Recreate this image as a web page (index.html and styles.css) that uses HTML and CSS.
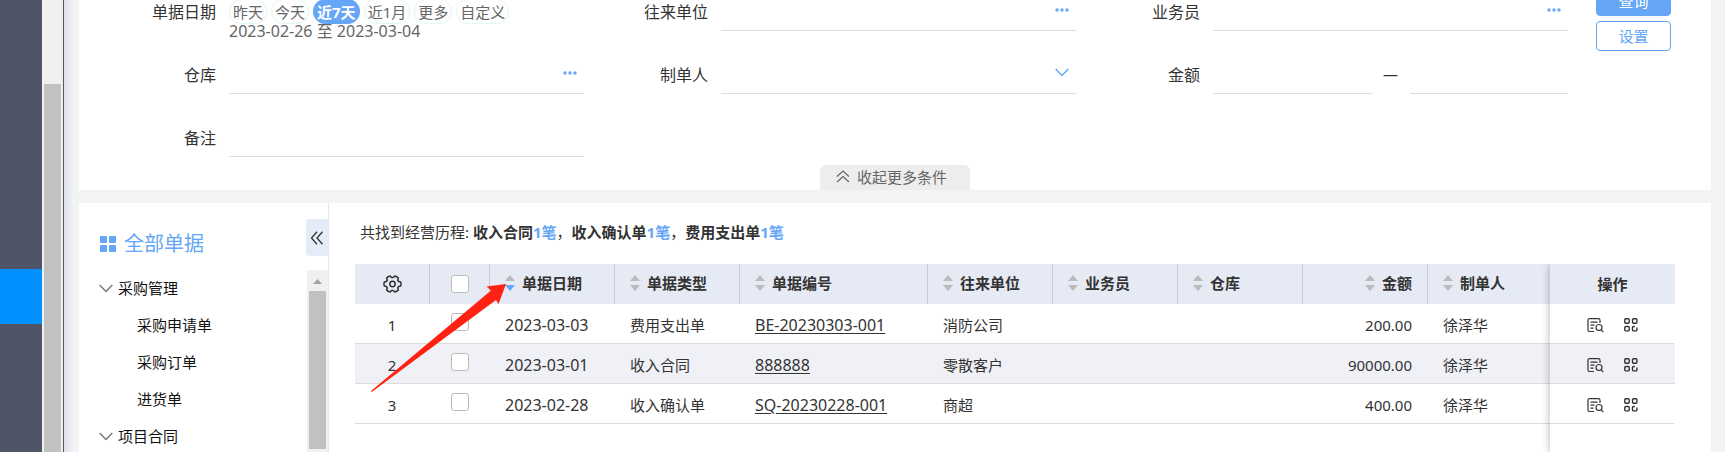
FILE: index.html
```html
<!DOCTYPE html>
<html lang="zh-CN">
<head>
    <meta charset="UTF-8">
    <meta name="viewport" content="width=device-width, initial-scale=1.0">
    <title>经营历程</title>
    <link rel="stylesheet" href="styles.css">
</head>
<body>
    <!-- shared icons -->
    <svg class="sprite" aria-hidden="true">
        <symbol id="icon-dots" viewBox="0 0 14 4">
            <circle cx="2" cy="2" r="1.7"/><circle cx="7" cy="2" r="1.7"/><circle cx="12" cy="2" r="1.7"/>
        </symbol>
        <symbol id="icon-down" viewBox="0 0 14 9">
            <path d="M.7 1 7 7.6 13.300 1" fill="none" stroke="currentColor" stroke-width="1.4"/>
        </symbol>
        <symbol id="icon-sort" viewBox="0 0 10 16">
            <path class="sort-up" d="M5 0l5 6H0z"/><path class="sort-down" d="M5 16l5-6H0z"/>
        </symbol>
        <symbol id="icon-view" viewBox="0 0 17 15">
            <g fill="none" stroke="currentColor" stroke-width="1.200">
                <path d="M7 13.500H2.600A1.500 1.500 0 0 1 1 12V2.200A1.500 1.500 0 0 1 2.600 .7H11.500A1.500 1.500 0 0 1 13 2.200V5"/>
                <path d="M3.500 4.200h7M3.500 7.200h4M3.500 10.200h3"/>
                <circle cx="12" cy="9.500" r="3"/>
                <path d="M14 11.800l2.400 2.400"/>
            </g>
        </symbol>
        <symbol id="icon-more" viewBox="0 0 14 14">
            <g fill="none" stroke="currentColor" stroke-width="1.400">
                <rect x=".8" y=".8" width="4.400" height="4.400" rx="1"/>
                <rect x="8.500" y=".8" width="4.400" height="4.400" rx="1"/>
                <rect x=".8" y="8.500" width="4.400" height="4.400" rx="1"/>
                <path d="M10.800 8.500H9.500a1 1 0 0 0-1 1v2.400a1 1 0 0 0 1 1h2.400a1 1 0 0 0 1-1V9.500"/>
            </g>
        </symbol>
    </svg>

    <nav class="side-nav">
        <a href="#" class="side-nav-active" aria-label="经营历程"></a>
    </nav>
    <div class="nav-scroll"><div class="nav-scroll-thumb"></div></div>

    <div class="page">
        <form class="search-panel">
            <div class="search-body">
                <div class="fields">
                    <div class="field">
                        <span class="field-label">单据日期</span>
                        <div class="date-box">
                            <div class="pills">
                                <button type="button" class="pill">昨天</button>
                                <button type="button" class="pill">今天</button>
                                <button type="button" class="pill active">近7天</button>
                                <button type="button" class="pill">近1月</button>
                                <button type="button" class="pill">更多</button>
                                <button type="button" class="pill">自定义</button>
                            </div>
                            <div class="date-range">2023-02-26 至 2023-03-04</div>
                        </div>
                    </div>
                    <div class="field">
                        <label class="field-label" for="unit">往来单位</label>
                        <div class="control">
                            <input type="text" id="unit">
                            <button type="button" class="pick" aria-label="选择往来单位"><svg class="dots"><use href="#icon-dots"/></svg></button>
                        </div>
                    </div>
                    <div class="field">
                        <label class="field-label" for="clerk">业务员</label>
                        <div class="control">
                            <input type="text" id="clerk">
                            <button type="button" class="pick" aria-label="选择业务员"><svg class="dots"><use href="#icon-dots"/></svg></button>
                        </div>
                    </div>
                    <div class="field">
                        <label class="field-label" for="store">仓库</label>
                        <div class="control">
                            <input type="text" id="store">
                            <button type="button" class="pick" aria-label="选择仓库"><svg class="dots"><use href="#icon-dots"/></svg></button>
                        </div>
                    </div>
                    <div class="field">
                        <label class="field-label" for="maker">制单人</label>
                        <div class="control">
                            <select id="maker"><option value=""></option></select>
                            <svg class="arrow-down"><use href="#icon-down"/></svg>
                        </div>
                    </div>
                    <div class="field">
                        <label class="field-label" for="amount-min">金额</label>
                        <div class="range">
                            <div class="control"><input type="text" id="amount-min"></div>
                            <span class="range-dash">—</span>
                            <div class="control"><input type="text" id="amount-max" aria-label="最大金额"></div>
                        </div>
                    </div>
                    <div class="field">
                        <label class="field-label" for="remark">备注</label>
                        <div class="control"><input type="text" id="remark"></div>
                    </div>
                </div>
                <div class="search-buttons">
                    <button type="submit" class="btn btn-primary">查询</button>
                    <button type="button" class="btn">设置</button>
                </div>
            </div>
            <button type="button" class="fold">
                <svg width="14" height="13" viewBox="0 0 14 13" fill="none" stroke="currentColor" stroke-width="1.200"><path d="M1 6.500 7 1l6 5.500M1 12l6-5.500 6 5.500"/></svg>
                收起更多条件
            </button>
        </form>

        <div class="result-panel">
            <aside class="tree-side">
                <div class="tree-top">
                    <h2 class="tree-title">
                        <svg width="16" height="16" viewBox="0 0 16 16" fill="currentColor"><rect width="7" height="7" rx="1"/><rect x="9" width="7" height="7" rx="1"/><rect y="9" width="7" height="7" rx="1"/><rect x="9" y="9" width="7" height="7" rx="1"/></svg>
                        全部单据
                    </h2>
                    <button type="button" class="tree-fold" aria-label="收起">
                        <svg width="14" height="14" viewBox="0 0 14 14" fill="none" stroke="currentColor" stroke-width="1.300"><path d="M7 .8 1.500 7 7 13.200M12.500 .8 7 7l5.500 6.200"/></svg>
                    </button>
                </div>
                <div class="tree-body">
                    <ul class="tree">
                        <li class="tree-parent"><svg class="arrow"><use href="#icon-down"/></svg>采购管理</li>
                        <li><a href="#">采购申请单</a></li>
                        <li><a href="#">采购订单</a></li>
                        <li><a href="#">进货单</a></li>
                        <li class="tree-parent"><svg class="arrow"><use href="#icon-down"/></svg>项目合同</li>
                    </ul>
                    <div class="tree-scroll">
                        <svg width="9" height="5" viewBox="0 0 9 5"><path d="M4.500 0 9 5H0z" fill="#a3a3a3"/></svg>
                        <div class="tree-scroll-thumb"></div>
                    </div>
                </div>
            </aside>

            <main class="result">
                <p class="summary">共找到经营历程: <b>收入合同<em>1笔</em></b>，<b>收入确认单<em>1笔</em></b>，<b>费用支出单<em>1笔</em></b></p>
                <div class="tables">
                    <table class="list">
                        <colgroup>
                            <col class="w-index"><col class="w-check"><col class="w-base"><col class="w-base"><col class="w-code">
                            <col class="w-base"><col class="w-base"><col class="w-base"><col class="w-base"><col class="w-last">
                        </colgroup>
                        <thead>
                            <tr>
                                <th class="center">
                                    <svg class="gear" width="19" height="18" viewBox="0 0 19 18" fill="none" stroke="currentColor" stroke-width="1.500" stroke-linejoin="round" aria-label="列设置"><path d="M17.700 7Q18.300 9 17.700 11L15.600 11.500 14.700 13 15.400 15.100Q14 16.600 11.800 17.100L10.400 15.500H8.600L7.200 17.100Q5 16.600 3.600 15.100L4.300 13 3.400 11.500 1.300 11Q.7 9 1.300 7L3.400 6.500 4.300 5 3.600 2.900Q5 1.400 7.200 .9L8.600 2.500h1.800L11.800 .9Q14 1.400 15.400 2.900L14.700 5 15.600 6.500z"/><circle cx="9.500" cy="9" r="2.700"/></svg>
                                </th>
                                <th class="center"><input type="checkbox" aria-label="全选"></th>
                                <th><span class="head desc"><svg class="sort"><use href="#icon-sort"/></svg>单据日期</span></th>
                                <th><span class="head"><svg class="sort"><use href="#icon-sort"/></svg>单据类型</span></th>
                                <th><span class="head"><svg class="sort"><use href="#icon-sort"/></svg>单据编号</span></th>
                                <th><span class="head"><svg class="sort"><use href="#icon-sort"/></svg>往来单位</span></th>
                                <th><span class="head"><svg class="sort"><use href="#icon-sort"/></svg>业务员</span></th>
                                <th><span class="head"><svg class="sort"><use href="#icon-sort"/></svg>仓库</span></th>
                                <th class="right"><span class="head"><svg class="sort"><use href="#icon-sort"/></svg>金额</span></th>
                                <th><span class="head"><svg class="sort"><use href="#icon-sort"/></svg>制单人</span></th>
                            </tr>
                        </thead>
                        <tbody>
                            <tr>
                                <td class="center">1</td>
                                <td class="center"><input type="checkbox" aria-label="选择第1行"></td>
                                <td class="num">2023-03-03</td>
                                <td>费用支出单</td>
                                <td class="num"><a href="#">BE-20230303-001</a></td>
                                <td>消防公司</td>
                                <td></td>
                                <td></td>
                                <td class="right">200.00</td>
                                <td>徐泽华</td>
                            </tr>
                            <tr>
                                <td class="center">2</td>
                                <td class="center"><input type="checkbox" aria-label="选择第2行"></td>
                                <td class="num">2023-03-01</td>
                                <td>收入合同</td>
                                <td class="num"><a href="#">888888</a></td>
                                <td>零散客户</td>
                                <td></td>
                                <td></td>
                                <td class="right">90000.00</td>
                                <td>徐泽华</td>
                            </tr>
                            <tr>
                                <td class="center">3</td>
                                <td class="center"><input type="checkbox" aria-label="选择第3行"></td>
                                <td class="num">2023-02-28</td>
                                <td>收入确认单</td>
                                <td class="num"><a href="#">SQ-20230228-001</a></td>
                                <td>商超</td>
                                <td></td>
                                <td></td>
                                <td class="right">400.00</td>
                                <td>徐泽华</td>
                            </tr>
                        </tbody>
                    </table>
                    <!-- fixed right column -->
                    <div class="fixed-col">
                        <table class="list">
                            <thead>
                                <tr><th class="center">操作</th></tr>
                            </thead>
                            <tbody>
                                <tr><td><div class="ops"><button type="button" aria-label="查看"><svg class="view"><use href="#icon-view"/></svg></button><button type="button" aria-label="更多操作"><svg class="more"><use href="#icon-more"/></svg></button></div></td></tr>
                                <tr><td><div class="ops"><button type="button" aria-label="查看"><svg class="view"><use href="#icon-view"/></svg></button><button type="button" aria-label="更多操作"><svg class="more"><use href="#icon-more"/></svg></button></div></td></tr>
                                <tr><td><div class="ops"><button type="button" aria-label="查看"><svg class="view"><use href="#icon-view"/></svg></button><button type="button" aria-label="更多操作"><svg class="more"><use href="#icon-more"/></svg></button></div></td></tr>
                            </tbody>
                        </table>
                    </div>
                    <svg class="pointer" viewBox="0 0 136 108" aria-hidden="true"><path d="M135 0 115.500 2.500 120 6.500 0 107l.8 1L125 16l2.500 4z" fill="#ff2213"/></svg>
                </div>
            </main>
        </div>
    </div>
</body>
</html>
```

FILE: styles.css
```css
* {
    box-sizing: border-box;
}
body {
    display: flex;
    height: 100vh;
    margin: 0;
    overflow: hidden;
    font-family: "Noto Sans", "Noto Sans CJK SC", sans-serif;
    font-size: 15px;
    line-height: 20px;
    color: #333;
    background: #f2f3f5;
}
button, input, select {
    margin: 0;
    padding: 0;
    border: 0;
    background: none;
    font: inherit;
    color: inherit;
}
button {
    cursor: pointer;
}
svg {
    display: block;
    flex: none;
}
.sprite {
    position: absolute;
    width: 0;
    height: 0;
}

/* left menu */
.side-nav {
    flex: none;
    width: 42px;
    padding-top: 269px;
    background: #4f5467;
}
.side-nav-active {
    display: block;
    height: 55px;
    background: #0090ff;
}
.nav-scroll {
    flex: none;
    width: 22px;
    padding: 84px 2px 0;
    background: #f0f0f0;
    border-right: 1px solid #4f5467;
}
.nav-scroll-thumb {
    height: 100%;
    background: #c1c1c1;
}
.page {
    flex: 1;
    min-width: 0;
    display: flex;
    flex-direction: column;
    gap: 13px;
    padding: 0 14px 0 15px;
    background: linear-gradient(to right, #dcdfe7, #f2f3f5 10px);
}

/* search form */
.search-panel {
    flex: none;
    display: flex;
    flex-direction: column;
    align-items: center;
    gap: 8px;
    margin-top: -24px;
    background: #fff;
}
.search-body {
    display: flex;
    gap: 28px;
    width: 100%;
    padding: 10px 40px 0 13px;
}
.fields {
    flex: 1;
    display: grid;
    grid-template-columns: repeat(3, minmax(0, 1fr));
    grid-auto-rows: 36px;
    row-gap: 27px;
    padding-top: 9px;
}
.field {
    display: flex;
    gap: 13px;
}
.field-label {
    flex: none;
    width: 124px;
    font-size: 16px;
    line-height: 34px;
    text-align: right;
}
.control {
    flex: 1;
    min-width: 0;
    display: flex;
    align-items: center;
    padding-right: 7px;
    border-bottom: 1px solid #dcdcdc;
}
.control input, .control select {
    flex: 1;
    min-width: 0;
    height: 35px;
    outline: none;
    appearance: none;
}
.pick {
    padding: 6px 0 12px;
    color: #66a6f7;
}
.dots {
    width: 14px;
    height: 4px;
    fill: currentColor;
}
.arrow-down {
    width: 14px;
    height: 9px;
    margin-bottom: 6px;
    color: #66a6f7;
}
.range {
    flex: 1;
    min-width: 0;
    display: flex;
}
.range-dash {
    width: 38px;
    line-height: 32px;
    text-align: center;
}
.date-box {
    padding-top: 4px;
    color: #666;
    white-space: nowrap;
}
.pills {
    display: flex;
    gap: 4px;
}
.pill {
    height: 25px;
    padding: 0 3px;
    border: 1px solid #e0f7f2;
    border-radius: 12px;
    line-height: 22px;
}
.pill.active {
    border-color: #66a6f7;
    background: #66a6f7;
    color: #fff;
    font-weight: bold;
}
.date-range {
    font-size: 16px;
    line-height: 14px;
}
.search-buttons {
    display: flex;
    flex-direction: column;
    gap: 5px;
}
.btn {
    width: 75px;
    height: 30px;
    border: 1px solid #66a6f7;
    border-radius: 4px;
    color: #66a6f7;
}
.btn-primary {
    background: #66a6f7;
    color: #fff;
}
.fold {
    display: flex;
    align-items: center;
    gap: 7px;
    width: 150px;
    height: 25px;
    padding: 0 0 2px 16px;
    border-radius: 6px 6px 0 0;
    background: #ededed;
    color: #666;
}

/* result area */
.result-panel {
    flex: 1;
    min-height: 0;
    display: flex;
    background: #fff;
}
.tree-side {
    flex: none;
    display: flex;
    flex-direction: column;
    width: 250px;
    border-right: 1px solid #e0e6f5;
}
.tree-top {
    flex: none;
    display: flex;
    justify-content: space-between;
    height: 67px;
    padding: 16px 0 0 21px;
}
.tree-title {
    display: flex;
    align-items: center;
    gap: 8px;
    height: 50px;
    margin: 0;
    font-size: 20px;
    font-weight: normal;
    color: #66a6f7;
}
.tree-fold {
    display: flex;
    align-items: center;
    justify-content: center;
    width: 22px;
    height: 37px;
    border-radius: 4px 0 0 4px;
    background: #e4ecf7;
}
.tree-body {
    flex: 1;
    min-height: 0;
    display: flex;
    justify-content: space-between;
    overflow: hidden;
}
.tree {
    margin: 0;
    padding: 0 0 0 20px;
    list-style: none;
    color: #111;
    line-height: 37px;
}
.tree li {
    padding-left: 38px;
}
.tree .tree-parent {
    display: flex;
    align-items: center;
    gap: 5px;
    padding-left: 0;
}
.tree a {
    color: inherit;
    text-decoration: none;
}
.arrow {
    width: 14px;
    height: 9px;
    color: #777;
}
.tree-scroll {
    display: flex;
    flex-direction: column;
    align-items: center;
    gap: 7px;
    width: 21px;
    padding: 9px 2px 3px;
    background: #f0f0f0;
}
.tree-scroll-thumb {
    flex: 1;
    width: 100%;
    background: #c1c1c1;
}
.result {
    flex: 1;
    min-width: 0;
    display: flex;
    flex-direction: column;
    padding: 19px 36px 0 26px;
}
.summary {
    margin: 0 0 22px;
    padding-left: 5px;
}
.summary em {
    font-style: normal;
    color: #66a6f7;
}

/* list */
.tables {
    position: relative;
    flex: 1;
    display: flex;
    align-items: flex-start;
}
.list {
    flex: 1;
    width: 100%;
    table-layout: fixed;
    border-collapse: separate;
    border-spacing: 0;
}
.w-index { width: 75px; }
.w-check { width: 60px; }
.w-base { width: 125px; }
.w-code { width: 188px; }
.w-last { width: 122px; }
.list th, .list td {
    height: 40px;
    padding: 0 15px;
    text-align: left;
    white-space: nowrap;
}
.list th {
    background: #e6eaf5;
    border-right: 1px solid #ccc;
}
.list th:last-child {
    border-right: 0;
}
.list td {
    padding-top: 3px;
    border-right: 1px solid #fff;
    border-bottom: 1px solid #dcdcdc;
}
.list tr:nth-child(even) td {
    background: #f0f1f7;
    border-right-color: #f0f1f7;
}
.list .center {
    padding-left: 0;
    padding-right: 0;
    text-align: center;
}
.list .right {
    text-align: right;
}
.list .num {
    font-size: 16px;
}
.list td a {
    color: inherit;
    text-underline-offset: 2px;
}
.list input {
    display: block;
    width: 18px;
    height: 18px;
    margin: 0 auto;
    appearance: none;
    background: #fff;
    border: 1px solid #bbb;
    border-radius: 3px;
}
.list td input {
    margin-bottom: 6px;
}
.gear {
    margin: 0 auto;
}
.head {
    display: inline-flex;
    align-items: center;
    gap: 7px;
}
.sort {
    width: 10px;
    height: 16px;
    fill: #bbb;
}
.desc .sort {
    --down: #66a6f7;
}
.sort-down {
    fill: var(--down, #bbb);
}
.fixed-col {
    flex: none;
    align-self: stretch;
    width: 125px;
    background: #fff;
    box-shadow: 0 0 8px rgba(0, 0, 0, 0.3);
    clip-path: inset(0 0 0 -10px);
}
.ops {
    display: flex;
    justify-content: center;
    gap: 20px;
}
.view {
    width: 17px;
    height: 15px;
}
.more {
    width: 14px;
    height: 14px;
}
.pointer {
    position: absolute;
    left: 16px;
    top: 20px;
    width: 136px;
    height: 108px;
}
```
